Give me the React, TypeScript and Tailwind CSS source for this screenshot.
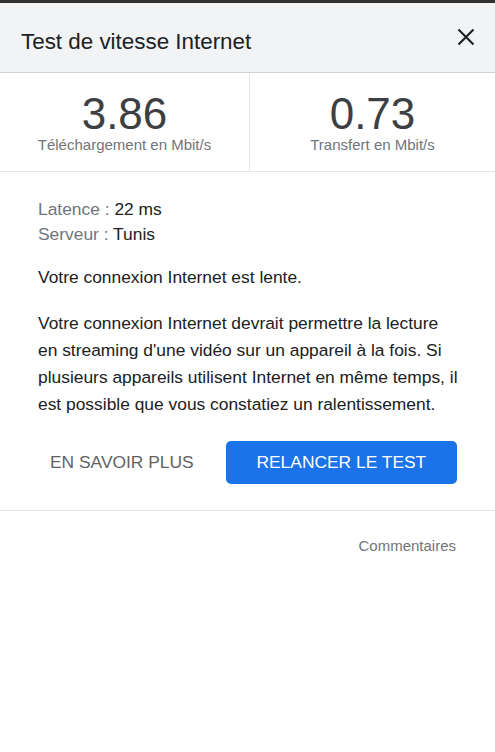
import React from 'react';

const SpeedStat: React.FC<{ value: string; label: string; divider?: boolean }> = ({ value, label, divider }) => (
  <div className={`flex flex-col items-center pt-[19px] ${divider ? 'w-[250px] border-r border-[#e6e6e6]' : 'flex-1'}`}>
    <p className="text-[44px] leading-none text-[#3c4043]">{value}</p>
    <p className="text-[15px] leading-[18px] text-[#70757a]">{label}</p>
  </div>
);

const App: React.FC = () => {
  return (
    <div className="h-[752px] w-[495px] bg-white font-['Liberation_Sans',Arial,sans-serif]">
      {/* Top strip */}
      <div className="h-[3px] bg-[#303030]" />

      {/* Header */}
      <div className="flex h-[70px] items-center justify-between border-b border-[#d4d4d4] bg-[#f1f3f4] pl-[21px] pr-[20px]">
        <h1 className="pt-[8px] text-[22.4px] leading-[26px] text-[#202124]">Test de vitesse Internet</h1>
        <button type="button" className="mb-[2px] text-[#202124]" aria-label="Fermer">
          <svg className="h-[18px] w-[18px]" viewBox="0 0 18 18" fill="none" stroke="currentColor" strokeWidth="2.2">
            <path d="M1.5 1.5 16.5 16.5M16.5 1.5 1.5 16.5" />
          </svg>
        </button>
      </div>

      {/* Speeds */}
      <div className="flex h-[99px] border-b border-[#e6e6e6]">
        <SpeedStat value="3.86" label="Téléchargement en Mbit/s" divider />
        <SpeedStat value="0.73" label="Transfert en Mbit/s" />
      </div>

      {/* Details */}
      <div className="border-b border-[#e8e8e8] pb-[26px] pl-[38px] pr-[34px] pt-[25px] text-[17.4px] text-[#202124]">
        <div className="leading-[25px]">
          <p>
            <span className="text-[#70757a]">Latence : </span>22 ms
          </p>
          <p>
            <span className="text-[#70757a]">Serveur : </span>Tunis
          </p>
        </div>
        <p className="mt-[18px] leading-[25px]">Votre connexion Internet est lente.</p>
        <p className="mt-[20px] leading-[27px]">
          Votre connexion Internet devrait permettre la lecture en streaming d'une vidéo sur un appareil à la fois. Si
          plusieurs appareils utilisent Internet en même temps, il est possible que vous constatiez un ralentissement.
        </p>
        <div className="mt-[23px] flex items-center gap-[20px] pr-[4px]">
          <button type="button" className="px-[12px] text-[17.4px] leading-[43px] text-[#5f6368]">
            EN SAVOIR PLUS
          </button>
          <button
            type="button"
            className="flex h-[43px] flex-1 items-center justify-center rounded-[5px] bg-[#1a73e8] text-[17.4px] text-white"
          >
            RELANCER LE TEST
          </button>
        </div>
      </div>

      {/* Footer */}
      <div className="flex justify-end pr-[39px] pt-[26px]">
        <p className="text-[15px] leading-[18px] text-[#70757a]">Commentaires</p>
      </div>
    </div>
  );
};

export default App;
